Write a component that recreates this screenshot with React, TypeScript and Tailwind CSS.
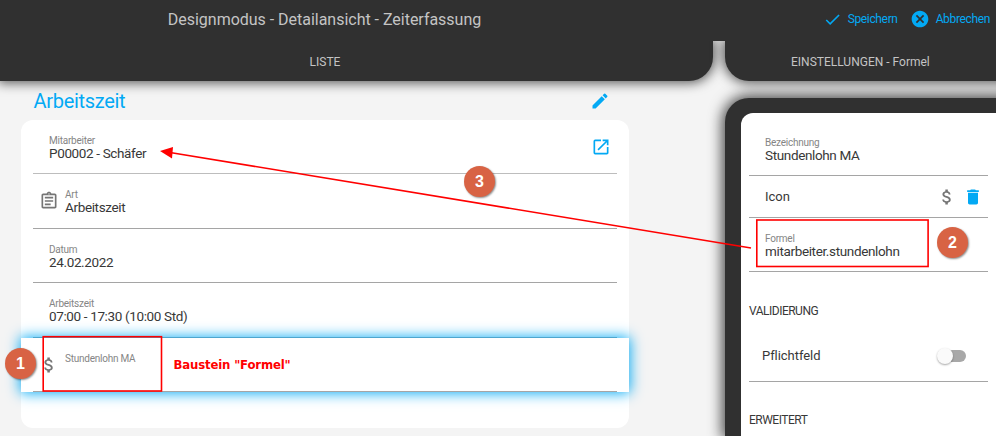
import type { ReactNode } from 'react';

const clipboardPath =
  'M19 3h-4.18C14.4 1.84 13.3 1 12 1s-2.4.84-2.82 2H5c-1.1 0-2 .9-2 2v14c0 1.1.9 2 2 2h14c1.1 0 2-.9 2-2V5c0-1.1-.9-2-2-2zm-7-.25c.41 0 .75.34.75.75s-.34.75-.75.75-.75-.34-.75-.75.34-.75.75-.75zM19 19H5V5h14v14zM7 7h10v2H7zm0 4h10v2H7zm0 4h7v2H7z';
const dollarPath =
  'M11.8 10.9c-2.27-.59-3-1.2-3-2.15 0-1.09 1.01-1.85 2.7-1.85 1.78 0 2.44.85 2.5 2.1h2.21c-.07-1.72-1.12-3.3-3.21-3.81V3h-3v2.16c-1.94.42-3.5 1.68-3.5 3.61 0 2.31 1.91 3.46 4.7 4.13 2.5.6 3 1.48 3 2.41 0 .69-.49 1.79-2.7 1.79-2.06 0-2.87-.92-2.98-2.1h-2.2c.12 2.19 1.76 3.42 3.68 3.83V21h3v-2.15c1.95-.37 3.5-1.5 3.5-3.55 0-2.84-2.43-3.81-4.7-4.4z';
const editPath =
  'M3 17.25V21h3.75L17.81 9.94l-3.75-3.75L3 17.25zM20.71 7.04a1 1 0 0 0 0-1.41l-2.34-2.34a1 1 0 0 0-1.41 0l-1.83 1.83 3.75 3.75 1.83-1.83z';
const openPath =
  'M19 19H5V5h7V3H5a2 2 0 0 0-2 2v14a2 2 0 0 0 2 2h14c1.1 0 2-.9 2-2v-7h-2v7zM14 3v2h3.59l-9.83 9.83 1.41 1.41L19 6.41V10h2V3h-7z';
const trashPath = 'M6 19c0 1.1.9 2 2 2h8c1.1 0 2-.9 2-2V7H6v12zM19 4h-3.5l-1-1h-5l-1 1H5v2h14V4z';
const checkPath = 'M9 16.17 4.83 12l-1.42 1.41L9 19 21 7l-1.41-1.41z';
const cancelPath =
  'M12 2C6.47 2 2 6.47 2 12s4.47 10 10 10 10-4.47 10-10S17.53 2 12 2zm5 13.59L15.59 17 12 13.41 8.41 17 7 15.59 10.59 12 7 8.41 8.41 7 12 10.59 15.59 7 17 8.41 13.41 12 17 15.59z';

function Icon({ d, className }: { d: string; className: string }) {
  return (
    <svg viewBox="0 0 24 24" fill="currentColor" className={`shrink-0 ${className}`}>
      <path d={d} />
    </svg>
  );
}

function Field({ label, value }: { label: string; value?: string }) {
  return (
    <div className="flex flex-col whitespace-nowrap">
      <span className="h-[10.8px] text-[10px] leading-[11.6px] tracking-[-0.24px] text-[#858585]">{label}</span>
      <span className="h-[14px] text-[13.5px] leading-[14px] tracking-[-0.36px] text-[#383838]">{value}</span>
    </div>
  );
}

function Row({ children, line = 'border-[#a5a5a5]' }: { children: ReactNode; line?: string }) {
  return (
    <div className={`mx-3 flex h-[54.4px] items-start border-b pt-[15px] ${line}`}>{children}</div>
  );
}

function Badge({ n, className }: { n: number; className: string }) {
  return (
    <div
      className={`absolute flex size-[31px] items-center justify-center rounded-full bg-[#d86344] font-['Liberation_Sans',sans-serif] text-[16px] font-bold text-white shadow-[1px_1px_2px_rgba(0,0,0,0.45)] ${className}`}
    >
      {n}
    </div>
  );
}

export default function App() {
  return (
    <div className="relative flex h-[436px] w-[996px] flex-col overflow-hidden bg-[#f4f4f4] font-['Roboto',sans-serif]">
      <header className="relative z-20 flex h-[41px] shrink-0 items-start bg-[#303030] whitespace-nowrap">
        <h1 className="w-[649px] pt-[10px] text-center text-[16px] leading-[20px] tracking-[-0.02px] text-[#c4c4c4]">
          Designmodus - Detailansicht - Zeiterfassung
        </h1>
        <div className="ml-auto flex h-[38px] items-center pr-[6px] text-[12px] tracking-[-0.35px] text-[#03a9f4]">
          <Icon d={checkPath} className="mr-[6px] size-[19px]" />
          <span>Speichern</span>
          <Icon d={cancelPath} className="mr-[6px] ml-[12px] size-[20px]" />
          <span>Abbrechen</span>
        </div>
      </header>

      <nav className="relative z-10 flex h-10 shrink-0 gap-3 text-[12px] text-[#c4c4c4]">
        <div className="flex w-[713px] shrink-0 items-center justify-center rounded-br-[24px] bg-[#303030] pt-px pr-[63px] shadow-[0_0_12px_2px_rgba(0,0,0,0.65)]">
          LISTE
        </div>
        <div className="flex w-[290px] shrink-0 items-center rounded-bl-[24px] bg-[#303030] pt-px pl-[66px] shadow-[0_0_12px_2px_rgba(0,0,0,0.65)]">
          EINSTELLUNGEN - Formel
        </div>
      </nav>

      <main className="flex flex-1 gap-[96px]">
        <section className="ml-[21px] w-[608px] shrink-0">
          <div className="flex h-[39px] items-center justify-between pr-[19px] pl-[12.5px] text-[#03a9f4]">
            <h2 className="text-[20px] leading-none tracking-[-0.3px]">Arbeitszeit</h2>
            <Icon d={editPath} className="size-[20px]" />
          </div>
          <div className="h-[308px] rounded-[12px] bg-white">
            <Row line="border-[#bdbdbd]">
              <div className="pl-4">
                <Field label="Mitarbeiter" value="P00002 - Schäfer" />
              </div>
              <Icon d={openPath} className="mt-[2px] mr-[6px] ml-auto size-5 text-[#03a9f4]" />
            </Row>
            <Row>
              <Icon d={clipboardPath} className="mt-[2px] mr-[6px] ml-[6px] size-5 text-[#757575]" />
              <Field label="Art" value="Arbeitszeit" />
            </Row>
            <Row>
              <div className="pl-4">
                <Field label="Datum" value="24.02.2022" />
              </div>
            </Row>
            <Row>
              <div className="pl-4">
                <Field label="Arbeitszeit" value="07:00 - 17:30 (10:00 Std)" />
              </div>
            </Row>
            <div className="relative bg-white shadow-[0_0_13px_1px_#03a9f4]">
              <Row>
                <Icon d={dollarPath} className="mt-[2px] mr-[6px] ml-[6px] size-5 text-[#757575]" />
                <div className="w-[108.5px]">
                  <Field label="Stundenlohn MA" />
                </div>
                <span className="mt-[4px] font-['DejaVu_Sans_Condensed','DejaVu_Sans',sans-serif] text-[13px] leading-[16px] font-bold tracking-[-0.15px] whitespace-nowrap text-[#f00] [font-stretch:condensed]">
                  Baustein "Formel"
                </span>
              </Row>
            </div>
          </div>
        </section>

        <aside className="mt-[17px] w-[290px] shrink-0 rounded-tl-[24px] bg-[#303030] pt-[15px] pl-4 shadow-[0_0_14px_3px_rgba(0,0,0,0.7)]">
          <div className="h-full rounded-tl-[12px] bg-white pl-2 text-[13px] text-[#383838]">
            <div className="w-[239px]">
              <div className="h-[63px] border-b border-[#a5a5a5] pt-[24px] pl-4">
                <Field label="Bezeichnung" value="Stundenlohn MA" />
              </div>
              <div className="flex h-[42px] items-center border-b border-[#a5a5a5] pr-[5px] pl-4">
                <span>Icon</span>
                <Icon d={dollarPath} className="ml-auto size-5 text-[#757575]" />
                <Icon d={trashPath} className="ml-[6px] size-5 text-[#03a9f4]" />
              </div>
              <div className="h-[54px] border-b border-[#a5a5a5] pt-[15px] pl-4">
                <Field label="Formel" value="mitarbeiter.stundenlohn" />
              </div>
              <h3 className="pt-[31px] text-[12px] leading-[16px] tracking-[-0.5px]">VALIDIERUNG</h3>
              <div className="mt-[11px] flex h-[52px] items-center justify-between border-b border-[#a5a5a5] pr-[22px] pl-[13px]">
                <span className="tracking-[-0.05px]">Pflichtfeld</span>
                <span className="flex h-[12px] w-[28px] items-center rounded-full bg-[#a8a8a8]">
                  <span className="-ml-[1px] size-4 rounded-full bg-[#fafafa] shadow-[0_1px_2px_rgba(0,0,0,0.35)]" />
                </span>
              </div>
              <h3 className="pt-[30px] text-[12px] leading-[16px] tracking-[-0.5px]">ERWEITERT</h3>
            </div>
          </div>
        </aside>
      </main>

      <svg className="absolute inset-0 z-30" width="996" height="436" fill="none">
        <path d="M751 248 170 152.5" stroke="#f00" strokeWidth="1.6" />
        <path d="m160 151 13-4-1 11.5z" fill="#f00" />
        <rect x="43.2" y="336.7" width="118.3" height="54.3" stroke="#f00" strokeWidth="1.6" />
        <rect x="756.8" y="220" width="171.3" height="46.5" stroke="#f00" strokeWidth="1.6" />
      </svg>
      <div className="absolute inset-0 z-40">
        <Badge n={1} className="top-[348px] left-[5px]" />
        <Badge n={2} className="top-[227px] left-[937px]" />
        <Badge n={3} className="top-[166px] left-[464px]" />
      </div>
    </div>
  );
}
